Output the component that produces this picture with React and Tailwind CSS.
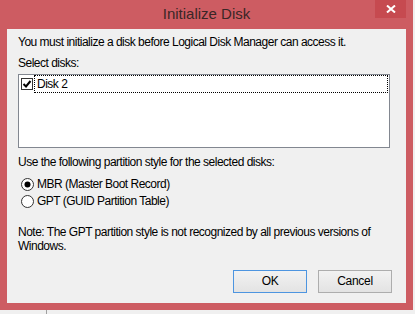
import React from "react";

const font = { fontFamily: '"Liberation Sans", Arial, sans-serif' };

function CheckBox() {
  return (
    <svg width="12" height="12" viewBox="0 0 12 12" className="shrink-0">
      <rect x="0.5" y="0.5" width="11" height="11" fill="#fff" stroke="#333" />
      <path d="M2.5 6 L5 8.5 L9.5 3" fill="none" stroke="#000" strokeWidth="2" />
    </svg>
  );
}

function Radio({ checked }) {
  return (
    <svg width="13" height="13" viewBox="0 0 13 13" className="shrink-0">
      <circle cx="6.5" cy="6.5" r="6" fill="#fff" stroke="#333" />
      {checked && <circle cx="6.5" cy="6.5" r="3" fill="#000" />}
    </svg>
  );
}

function Button({ children, primary }) {
  return (
    <button
      className={`w-[74px] h-[23px] text-[12px] tracking-[-0.3px] text-black bg-gradient-to-b from-[#f2f2f2] to-[#e3e3e3] border ${
        primary ? "border-[#4d95e0]" : "border-[#adadad]"
      }`}
    >
      {children}
    </button>
  );
}

export default function App() {
  return (
    <div className="w-[415px] h-[314px] bg-[#f0f0f0] overflow-hidden" style={font}>
      <div className="w-[413px] h-[310px] bg-[#cd5c62] flex flex-col px-[7px] pb-[7px]">
        <div className="h-[29px] relative flex items-start justify-center">
          <span className="mt-[5px] text-[15px] leading-[18px] text-[#3a2626]">Initialize Disk</span>
          <div className="absolute right-[0px] top-0 w-[31px] h-[18px] bg-[#c64a50] flex items-center justify-center">
            <svg width="10" height="8" viewBox="0 0 10 8">
              <path d="M1 0.5 L9 7.5 M9 0.5 L1 7.5" stroke="#fff" strokeWidth="2" />
            </svg>
          </div>
        </div>
        <div className="flex-1 bg-[#f0f0f0] flex flex-col pl-[11px] pr-[14px] text-[12px] leading-[15px] tracking-[-0.5px] text-black">
          <p className="mt-[6px]">You must initialize a disk before Logical Disk Manager can access it.</p>
          <p className="mt-[6px]">Select disks:</p>
          <div className="mt-[3px] w-[372px] h-[74px] bg-white border border-[#828790]">
            <div className="flex items-center h-[18px] pl-[2px] pr-[1px]">
              <CheckBox />
              <div className="ml-[1px] flex-1 h-[18px] border border-dotted border-black pl-[2px] leading-[16px]">
                Disk 2
              </div>
            </div>
          </div>
          <p className="mt-[7px]">Use the following partition style for the selected disks:</p>
          <div className="mt-[6px] flex flex-col">
            <label className="h-[17px] flex items-center gap-[3px] pl-[3px]">
              <Radio checked />
              <span>MBR (Master Boot Record)</span>
            </label>
            <label className="h-[17px] flex items-center gap-[3px] pl-[3px]">
              <Radio />
              <span>GPT (GUID Partition Table)</span>
            </label>
          </div>
          <p className="mt-[15px] leading-[14px] w-[372px]">
            Note: The GPT partition style is not recognized by all previous versions of Windows.
          </p>
          <div className="mt-auto mb-[10px] flex justify-end gap-[11px]">
            <Button primary>OK</Button>
            <Button>Cancel</Button>
          </div>
        </div>
      </div>
      <div className="h-[4px] flex">
        <div className="w-[46px]" />
        <div className="border-l border-[#a0a0a0]" />
      </div>
    </div>
  );
}
